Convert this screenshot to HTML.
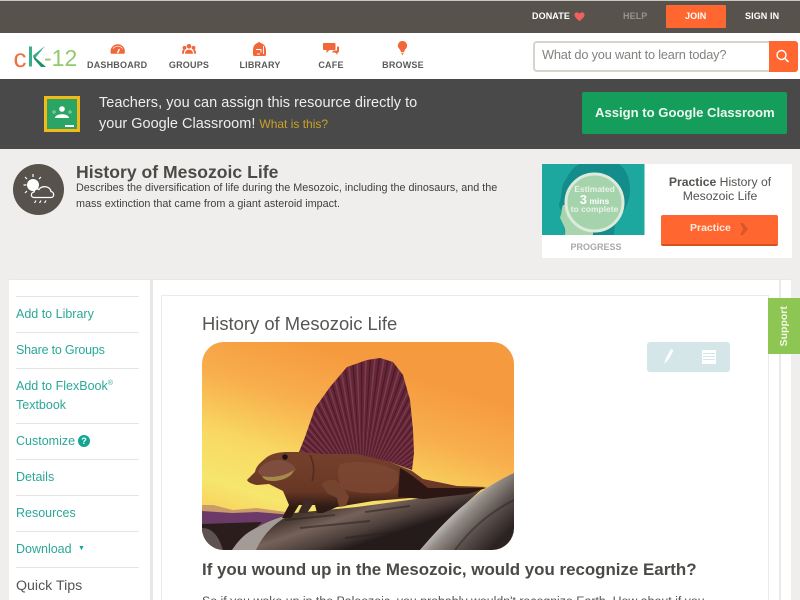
<!DOCTYPE html>
<html><head><meta charset="utf-8"><title>History of Mesozoic Life</title>
<style>
html,body{margin:0;padding:0;width:800px;height:600px;overflow:hidden;background:#efeeec;font-family:"Liberation Sans",sans-serif}
#w{position:absolute;left:0;top:0;width:800px;height:600px;overflow:hidden}
#w div{position:absolute}
.t{position:absolute;white-space:nowrap;line-height:1}
.nav{font-size:9px;font-weight:bold;color:#5a5a58;top:61px;text-align:center;letter-spacing:.2px}
.top{font-size:9px;font-weight:bold;color:#fff;top:12px;letter-spacing:.1px}
.hr{left:16px;width:123px;height:1px;background:#e4e4e1}
.sl{left:16px;font-size:12.5px;color:#2aa897}
</style></head><body><div id="w">
<div style="left:0;top:0;width:800px;height:33px;background:#57534c"></div>
<div style="left:0;top:0;width:800px;height:1px;background:#c9c8c4"></div>
<div style="left:0;top:33px;width:800px;height:46px;background:#fff"></div>
<div style="left:0;top:79px;width:800px;height:70px;background:#494949"></div>

<span class="t top" style="left:532px">DONATE</span>
<span class="t top" style="left:623px;color:#96938c">HELP</span>
<div style="left:666px;top:5px;width:60px;height:23px;background:#ff6630;border-radius:1px"></div>
<span class="t top" style="left:685px">JOIN</span>
<span class="t top" style="left:745px">SIGN IN</span>

<svg style="position:absolute;left:0;top:0" width="800" height="600" viewBox="0 0 800 600">
<defs>
<linearGradient id="sky" gradientUnits="userSpaceOnUse" x1="305" y1="342" x2="250" y2="522">
<stop offset="0" stop-color="#f59a3e"/><stop offset=".3" stop-color="#f8ae4c"/><stop offset=".6" stop-color="#f8d862"/><stop offset=".85" stop-color="#f6e66e"/><stop offset="1" stop-color="#f8d25c"/></linearGradient>
<linearGradient id="log" gradientUnits="userSpaceOnUse" x1="330" y1="505" x2="345" y2="550">
<stop offset="0" stop-color="#46362f"/><stop offset=".35" stop-color="#75625a"/><stop offset=".75" stop-color="#4a3c38"/><stop offset="1" stop-color="#241b1a"/></linearGradient>
<linearGradient id="log2" gradientUnits="userSpaceOnUse" x1="455" y1="505" x2="495" y2="545">
<stop offset="0" stop-color="#d2cfca"/><stop offset=".25" stop-color="#938c87"/><stop offset=".6" stop-color="#5a4e4a"/><stop offset="1" stop-color="#2a2322"/></linearGradient>
<linearGradient id="body" gradientUnits="userSpaceOnUse" x1="340" y1="455" x2="340" y2="507">
<stop offset="0" stop-color="#74402c"/><stop offset=".7" stop-color="#683724"/><stop offset="1" stop-color="#2e1a15"/></linearGradient>
<clipPath id="img"><rect x="202" y="342" width="312" height="208" rx="22"/></clipPath>
<clipPath id="sail"><path d="M299 452L305 437 315 408 330 387 347 367 367 360 380 358 393 362 403 375 410 400 413 430 414 453 412 470 390 462 357 455 323 455Z"/></clipPath>
</defs>
<!-- logo -->
<text x="13.5" y="67" font-size="26" fill="#ef6f3f" font-family="Liberation Sans">c</text>
<path d="M30.500 46.500V66.500" stroke="#3aae8e" stroke-width="3" fill="none"/>
<path d="M45 46L33 55.500 35 58.500Z" fill="#3aae8e"/>
<path d="M33 55.500L46 67 41 67 34 59Z" fill="#1a9168"/>
<text x="44" y="66" font-size="23" fill="#93c96b" font-family="Liberation Sans">-12</text>

<!-- nav icons -->
<path d="M110.500 51.500a7.200 7.200 0 0 1 14.400 0c0 1-.2 1.600-.5 2.200h-13.400c-.3-.6-.5-1.200-.5-2.200Z" fill="#f2673a"/>
<path d="M113 48.500a6 6 0 0 1 9.500 0" stroke="#fff" stroke-width=".7" fill="none"/><path d="M117.500 53l2-4" stroke="#fff" stroke-width="1.400"/>
<g fill="#f2673a"><circle cx="189" cy="46.300" r="2.300"/><path d="M185 53.700c0-5.500 8-5.500 8 0Z"/><circle cx="184.500" cy="47.800" r="1.900"/><path d="M182 53.700c0-4 1-4.500 2.800-4.500l-1 4.500Z"/><circle cx="193.500" cy="47.800" r="1.900"/><path d="M196 53.700c0-4-1-4.500-2.800-4.500l1 4.500Z"/></g>
<path d="M253 50c0-3.800 2-6.500 5-7.300 0-.9 2-.9 2 0 3.500.8 6 3.500 6 7.300v4.500c0 .9-.8 1.500-1.500 1.500h-10c-.8 0-1.500-.6-1.500-1.500Z" fill="#f2673a"/>
<path d="M256 49.500h5v3M260 54h-3M263.500 46v8" stroke="#fff" stroke-width=".9" fill="none"/>
<path d="M324 43h10.500c.5 0 1 .4 1 1v5c0 .6-.5 1-1 1h-5l-3 3v-3h-2.500c-.6 0-1-.4-1-1v-5c0-.6.4-1 1-1Z" fill="#f2673a"/>
<path d="M337 46.500h1.200c.5 0 .8.4.8 1v4c0 .6-.3 1-.8 1h-.7v2.300l-2.500-2.300h-3l1.300-2h3.700Z" fill="#f2673a"/>
<path d="M402.500 41a4.600 4.600 0 0 1 3.300 7.800c-.9 1-1.500 2-1.700 3.200h-3.200c-.2-1.200-.8-2.200-1.700-3.200a4.600 4.600 0 0 1 3.300-7.800Z" fill="#f2673a"/><path d="M401 52.700h3l-.4 1.100h-2.200ZM401.700 54.200h1.600l-.5 1h-.6Z" fill="#f2673a"/>

<!-- heart -->
<path d="M579.500 21c-3-2.300-5-4-5-6.300 0-2.500 3.500-3.200 5-1 1.500-2.200 5-1.500 5 1 0 2.300-2 4-5 6.300Z" fill="#f0605c"/>

<!-- search -->
<rect x="534" y="42" width="263" height="29" rx="3" fill="#fff" stroke="#d6d4cc" stroke-width="2"/>
<path d="M769 41h26a3 3 0 0 1 3 3v25a3 3 0 0 1-3 3h-26Z" fill="#ff6630"/>
<circle cx="781.500" cy="55" r="4.500" stroke="#fff" stroke-width="1.400" fill="none"/><path d="M785 58.500l3.500 3.500" stroke="#fff" stroke-width="1.600"/>

<!-- classroom -->
<rect x="45.500" y="97.500" width="33" height="33" fill="#2ba566" stroke="#f3b916" stroke-width="3"/>
<g fill="#fff"><circle cx="62" cy="109" r="2.800"/><path d="M55 118c0-5 14-5 14 0Z"/><rect x="65" y="125" width="9" height="2"/></g>
<g fill="#7cc49a"><circle cx="54" cy="112" r="1.800"/><circle cx="70" cy="112" r="1.800"/></g>

<!-- assign -->
<rect x="582" y="92" width="205" height="42" rx="2" fill="#159e5b"/>

<!-- header weather -->
<circle cx="38.500" cy="189.500" r="25.500" fill="#57534c"/>
<circle cx="33" cy="185" r="6" fill="#fff"/>
<path d="M33 174v3M25 177l2 2M41 177l-2 2M23.500 185h3M25 193l2-2" stroke="#fff" stroke-width="1.200"/>
<path d="M34 197.500c-3.500 0-3.500-5 0-5.500 .5-3 3-3.500 5-2.500 2-4 11-4 12 2 3.500.5 3.500 6 0 6Z" fill="#57534c" stroke="#fff" stroke-width="1.300"/>
<path d="M36 200.500l-1.500 2.500M41 200.500l-1.500 2.500M46 200.500l-1.500 2.500" stroke="#fff" stroke-width="1.200"/>

<!-- practice card -->
<rect x="542" y="164" width="250" height="94" fill="#fff"/>
<rect x="542" y="164" width="102.500" height="71" fill="#1ca89e"/>
<path d="M565 235c0-8-3-12-3-20 0-6-5-8-2-14 3-8 0-14 6-22 4-7 8-13 14-15h39c8 6 11 16 11 26 0 14-8 24-13 30-2 3-3 9-3 15Z" fill="#148c8b"/>
<path d="M565 235c1-6-1-9-3-13-1-3-3-4-1-7 1-3 0-5 2-10h30v30Z" fill="#a8d5ae"/>
<circle cx="594.500" cy="202.500" r="28.500" fill="#a5d3ac" stroke="#dcebdc" stroke-width="3"/>
</svg>

<span class="t nav" style="left:87px;width:60px">DASHBOARD</span>
<span class="t nav" style="left:159px;width:60px">GROUPS</span>
<span class="t nav" style="left:230px;width:60px">LIBRARY</span>
<span class="t nav" style="left:301px;width:60px">CAFE</span>
<span class="t nav" style="left:373px;width:60px">BROWSE</span>

<span class="t" style="left:542px;top:49px;font-size:12.8px;letter-spacing:-.2px;color:#84827e">What do you want to learn today?</span>
<span class="t" style="left:99px;top:96px;font-size:14.5px;letter-spacing:.03px;color:#eee">Teachers, you can assign this resource directly to</span>
<span class="t" style="left:99px;top:117px;font-size:14.5px;color:#eee">your Google Classroom! <span style="font-size:12px;color:#c9a227">What is this?</span></span>
<span class="t" style="left:595px;top:106px;font-size:13.1px;font-weight:bold;color:#eef6f0">Assign to Google Classroom</span>

<span class="t" style="left:76px;top:164px;font-size:17.6px;font-weight:bold;color:#4b4a46">History of Mesozoic Life</span>
<span class="t" style="left:76px;top:183px;font-size:10.8px;color:#3f3f3d">Describes the diversification of life during the Mesozoic, including the dinosaurs, and the</span>
<span class="t" style="left:76px;top:199px;font-size:10.8px;color:#3f3f3d">mass extinction that came from a giant asteroid impact.</span>

<span class="t" style="left:566px;top:185px;width:57px;text-align:center;font-size:8.5px;font-weight:bold;color:#e8f3e6">Estimated</span>
<span class="t" style="left:566px;top:193px;width:57px;text-align:center;font-size:8.5px;font-weight:bold;color:#fff"><span style="font-size:13px">3</span> mins</span>
<span class="t" style="left:566px;top:205px;width:57px;text-align:center;font-size:8.5px;font-weight:bold;color:#e8f3e6">to complete</span>
<span class="t" style="left:542px;top:243px;width:108px;text-align:center;font-size:9px;font-weight:bold;color:#a9a9a7">PROGRESS</span>
<span class="t" style="left:645px;top:176px;width:150px;text-align:center;font-size:12.2px;color:#55534f"><b>Practice</b> History of</span>
<span class="t" style="left:645px;top:190px;width:150px;text-align:center;font-size:12.2px;color:#55534f">Mesozoic Life</span>
<div style="left:661px;top:215px;width:117px;height:29px;background:#ff6630;border-bottom:2px solid #d7511f;border-radius:2px"></div>
<span class="t" style="left:690px;top:223px;font-size:10.5px;font-weight:bold;color:#fbe9e0">Practice</span>
<svg style="position:absolute;left:736px;top:220px" width="16" height="18" viewBox="0 0 16 18"><path d="M4 3h3l5 6-5 6H4l3.500-6Z" fill="#d9562a"/></svg>

<!-- panels -->
<div style="left:9px;top:280px;width:141px;height:320px;background:#fff"></div>
<div style="left:150px;top:280px;width:3px;height:320px;background:#e7e7e5"></div>
<div style="left:153px;top:280px;width:638px;height:320px;background:#fff"></div>
<div style="left:9px;top:279px;width:782px;height:1px;background:#e7e7e5"></div>
<div style="left:779px;top:280px;width:2px;height:320px;background:#e9e9e7"></div>
<div style="left:161px;top:295px;width:608px;height:305px;border:1px solid #ebebe9;border-bottom:0;box-sizing:border-box"></div>

<div class="hr" style="top:296px"></div><div class="hr" style="top:332px"></div><div class="hr" style="top:368px"></div><div class="hr" style="top:423px"></div><div class="hr" style="top:459px"></div><div class="hr" style="top:495px"></div><div class="hr" style="top:531px"></div><div class="hr" style="top:567px"></div>
<span class="t sl" style="top:308px">Add to Library</span>
<span class="t sl" style="top:344px;letter-spacing:-.2px">Share to Groups</span>
<span class="t sl" style="top:380px">Add to FlexBook<sup style="font-size:7px;line-height:0">®</sup></span>
<span class="t sl" style="top:399px">Textbook</span>
<span class="t sl" style="top:435px">Customize</span>
<span class="t" style="left:78px;top:435px;width:12px;height:12px;border-radius:6px;background:#12a594;color:#fff;font-size:9px;font-weight:bold;text-align:center;line-height:12px">?</span>
<span class="t sl" style="top:471px">Details</span>
<span class="t sl" style="top:507px">Resources</span>
<span class="t sl" style="top:543px">Download</span>
<span class="t" style="left:78px;top:545px;font-size:7px;color:#12a594">▼</span>
<span class="t" style="left:16px;top:579px;font-size:14.2px;color:#555">Quick Tips</span>

<span class="t" style="left:202px;top:315px;font-size:18.4px;color:#575653">History of Mesozoic Life</span>

<svg style="position:absolute;left:0;top:0" width="800" height="600" viewBox="0 0 800 600">
<!-- icon box -->
<rect x="647" y="342" width="83" height="30" rx="3" fill="#d5e6e8"/>
<path d="M664 364l2-6 5-9 2.500 1.500-5 9Z" fill="#fff"/>
<rect x="702" y="350" width="14" height="14" fill="#fff"/><path d="M703 353.500h12M703 356.500h12M703 359.500h12" stroke="#d5e6e8" stroke-width=".9"/>
<g clip-path="url(#img)">
<rect x="202" y="342" width="312" height="208" fill="url(#sky)"/>
<path d="M202 505l11 0 20 5 24-2 36 5-40 20-51 0Z" fill="#c99a6a"/>
<path d="M202 511l30 2 25-1 36 3-30 17h-61Z" fill="#6b3a68"/>
<path d="M202 524l60-2-30 30h-30Z" fill="#2a1d1c"/>
<path d="M202 528c8 0 14 5 18 14l3 8h-21Z" fill="#5d5350"/>
<!-- log -->
<path d="M232 550c8-12 15-18 26-23 10-6 22-11 36-14l63-6 66-9 60-10-33 30-30 32Z" fill="url(#log)"/>
<path d="M232 550c8-12 15-18 26-23 10-6 22-10 36-14-18 8-30 20-38 37Z" fill="#a39c96"/>
<path d="M300 528l70-7M345 538l50-6M285 520l50-5M365 512l45-6" stroke="#2a201d" stroke-width="2" fill="none" opacity=".55"/>
<path d="M420 550c12-14 28-32 44-45 14-12 32-24 50-32v77Z" fill="url(#log2)"/>
<path d="M455 550c15-20 32-36 59-50" stroke="#2a2422" stroke-width="2" fill="none" opacity=".5"/>
<!-- sail -->
<path d="M299 452L305 437 315 408 330 387 347 367 367 360 380 358 393 362 403 375 410 400 413 430 414 453 412 470 390 462 357 455 323 455Z" fill="#662638"/>
<g clip-path="url(#sail)"><circle cx="362" cy="492" r="75" fill="none" stroke="#93606c" stroke-width="150" stroke-dasharray="1 4" opacity=".45"/>
<circle cx="362" cy="492" r="75" fill="none" stroke="#2f1019" stroke-width="150" stroke-dasharray=".8 4.200" stroke-dashoffset="2.400" opacity=".55"/></g>
<!-- tail & body -->
<path d="M255 472c1-6 6-10 12-15 6-4 14-5 20-5h14l22 2 34 0 33 8 22 9 11 8 34 7 30 1-20 5-44 5-50 4-36 6-14 6-6 0-2-8-16 0-8 13-9 0 7-13-6-14-14-7-12 1c-6-1-9-3-10-5Z" fill="url(#body)"/>
<path d="M258 471c3-7 14-12 22-11 8 1 15 5 16 10-8 6-20 9-30 7-4-1-8-3-8-6Z" fill="#7e4d3e"/>
<path d="M262 476c8 2 22 1 32-6-2 7-12 11-22 11-5 0-9-2-10-5Z" fill="#a68a4c"/>
<circle cx="285" cy="457" r="2.800" fill="#1c1210"/>
<path d="M310 455c4 8 5 16 2 26" stroke="#3d2018" stroke-width="1.500" fill="none" opacity=".6"/>
<path d="M322 485c3-6 11-7 16-3 6 5 8 10 11 15l-3 9-7 1-2-9-10-5Z" fill="#74442f"/>
<path d="M306 497c3 3 7 4 9 4l-8 12h-9Z" fill="#3e2a26"/>
<path d="M400 468c10 5 20 14 28 20l58 0-18 6-44 5-26-2Z" fill="#2c1714"/>
<path d="M340 464c15-4 40-3 58 8 2 8-2 16-10 20-15 2-35 2-46-4-5-8-5-18-2-24Z" fill="#7d4834" opacity=".75"/>
</g>
</svg>

<div style="left:768px;top:298px;width:32px;height:56px;background:#8dc653"></div>
<span class="t" style="left:756px;top:321px;width:56px;text-align:center;font-size:10.5px;font-weight:bold;color:#f2f8e9;transform:rotate(-90deg)">Support</span>

<span class="t" style="left:202px;top:562px;font-size:16.9px;font-weight:bold;color:#4b4a46">If you wound up in the Mesozoic, would you recognize Earth?</span>
<span class="t" style="left:202px;top:595px;font-size:12.35px;color:#555">So if you woke up in the Paleozoic, you probably wouldn't recognize Earth. How about if you</span>
</div></body></html>
